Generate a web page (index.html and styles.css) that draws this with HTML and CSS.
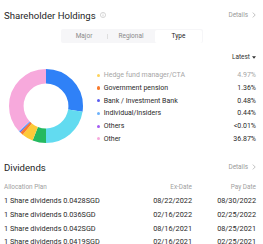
FILE: index.html
```html
<!DOCTYPE html>
<html>
<head>
<meta charset="utf-8">
<link rel="stylesheet" href="styles.css">
</head>
<body>
<div class="page">
  <section class="holdings">
    <div class="head">
      <div class="title">Shareholder Holdings
        <svg class="info" viewBox="0 0 10 10" width="6" height="6"><circle cx="5" cy="5" r="4.3" fill="none" stroke="#b5b5b5" stroke-width="0.9"/><rect x="4.5" y="4.2" width="1" height="3.3" fill="#b5b5b5"/><rect x="4.5" y="2.5" width="1" height="1" fill="#b5b5b5"/></svg>
      </div>
      <div class="more">Details <svg class="chev" viewBox="0 0 6 10" width="4" height="6"><polyline points="1,1 5,5 1,9" fill="none" stroke="#999" stroke-width="1"/></svg></div>
    </div>
    <div class="seg-wrap">
      <div class="seg">
        <span class="opt first">Major</span>
        <span class="opt">Regional</span>
        <span class="opt on">Type</span>
      </div>
    </div>
    <div class="latest-row">
      <span class="latest">Latest <svg viewBox="0 0 6 4" width="4" height="3"><polygon points="0,0 6,0 3,4" fill="#333"/></svg></span>
    </div>
    <div class="chart-row">
      <svg class="donut" viewBox="0 0 74 74" width="74" height="74">
        <g transform="rotate(-90 37 37)" fill="none" stroke-width="14.6">
          <circle cx="37" cy="37" r="29.7" pathLength="100" stroke="#2f81f7" stroke-dasharray="27.5 100" stroke-dashoffset="0"/>
          <circle cx="37" cy="37" r="29.7" pathLength="100" stroke="#62dbf0" stroke-dasharray="22.5 100" stroke-dashoffset="-27.5"/>
          <circle cx="37" cy="37" r="29.7" pathLength="100" stroke="#25b960" stroke-dasharray="5.9 100" stroke-dashoffset="-50"/>
          <circle cx="37" cy="37" r="29.7" pathLength="100" stroke="#fdca38" stroke-dasharray="4.97 100" stroke-dashoffset="-55.9"/>
          <circle cx="37" cy="37" r="29.7" pathLength="100" stroke="#f97b2c" stroke-dasharray="1.36 100" stroke-dashoffset="-60.87"/>
          <circle cx="37" cy="37" r="29.7" pathLength="100" stroke="#5a5cf0" stroke-dasharray="0.48 100" stroke-dashoffset="-62.23"/>
          <circle cx="37" cy="37" r="29.7" pathLength="100" stroke="#6cb1fb" stroke-dasharray="0.44 100" stroke-dashoffset="-62.71"/>
          <circle cx="37" cy="37" r="29.7" pathLength="100" stroke="#f7a9dc" stroke-dasharray="36.85 100" stroke-dashoffset="-63.15"/>
        </g>
      </svg>
      <ul class="legend">
        <li class="dim"><i class="dot" style="background:#fdd35a"></i><span class="lab">Hedge fund manager/CTA</span><span class="val">4.97%</span></li>
        <li><i class="dot" style="background:#f97b2c"></i><span class="lab">Government pension</span><span class="val">1.36%</span></li>
        <li><i class="dot" style="background:#5a5cf0"></i><span class="lab">Bank / Investment Bank</span><span class="val">0.48%</span></li>
        <li><i class="dot" style="background:#6cb1fb"></i><span class="lab">Individual/Insiders</span><span class="val">0.44%</span></li>
        <li><i class="dot" style="background:#a45bf3"></i><span class="lab">Others</span><span class="val">&lt;0.01%</span></li>
        <li><i class="dot" style="background:#f7a9dc"></i><span class="lab">Other</span><span class="val">36.87%</span></li>
      </ul>
    </div>
  </section>

  <section class="dividends">
    <div class="head head2">
      <div class="title">Dividends</div>
      <div class="more">Details <svg class="chev" viewBox="0 0 6 10" width="4" height="6"><polyline points="1,1 5,5 1,9" fill="none" stroke="#999" stroke-width="1"/></svg></div>
    </div>
    <div class="table">
      <div class="row th"><span>Allocation Plan</span><span class="r">Ex-Date</span><span class="r">Pay Date</span></div>
      <div class="row"><span>1 Share dividends 0.0428SGD</span><span class="r">08/22/2022</span><span class="r">08/30/2022</span></div>
      <div class="row"><span>1 Share dividends 0.036SGD</span><span class="r">02/16/2022</span><span class="r">02/25/2022</span></div>
      <div class="row"><span>1 Share dividends 0.042SGD</span><span class="r">08/16/2021</span><span class="r">08/25/2021</span></div>
      <div class="row"><span>1 Share dividends 0.0419SGD</span><span class="r">02/16/2021</span><span class="r">02/25/2021</span></div>
    </div>
  </section>
</div>
</body>
</html>
```

FILE: styles.css
```css
* { box-sizing: border-box; }
html, body { margin: 0; padding: 0; background: #fff; }
body {
  font-family: Roboto, "Liberation Sans", Arial, sans-serif;
  color: #333;
  width: 263px;
  height: 244px;
  overflow: hidden;
}
.page { padding: 0 7px 0 4px; }

.head {
  display: flex;
  justify-content: space-between;
  align-items: center;
  height: 28px;
  padding-top: 2px;
}
.title {
  font-size: 9.6px;
  color: #1e1e1e;
  display: flex;
  align-items: center;
  gap: 4px;
}
.info { display: block; }
.more {
  font-size: 6.4px;
  color: #999;
  display: flex;
  align-items: center;
  gap: 4px;
}
.chev { display: block; }

.seg-wrap {
  display: flex;
  justify-content: center;
  margin-top: 1px;
  padding-left: 3px;
}
.seg {
  display: flex;
  width: 142px;
  height: 14px;
  background: #f6f6f8;
  border-radius: 2px;
}
.opt {
  flex: 1;
  display: flex;
  align-items: center;
  justify-content: center;
  font-size: 6.5px;
  color: #8a8a8a;
  position: relative;
}
.opt.first::after {
  content: "";
  position: absolute;
  right: 0;
  top: 4.5px;
  height: 5px;
  width: 1px;
  background: #dedede;
}
.opt.on {
  background: #fff;
  color: #222;
  border-radius: 2px;
  margin: 0.5px;
}

.latest-row {
  display: flex;
  justify-content: flex-end;
  margin-top: 8px;
  height: 12px;
  align-items: center;
}
.latest {
  font-size: 6.5px;
  color: #333;
  display: flex;
  align-items: center;
  gap: 2px;
}
.latest svg { display: block; }

.chart-row {
  display: flex;
  align-items: flex-start;
  margin-top: 6px;
  height: 76px;
}
.donut { display: block; margin-left: 5px; flex: none; }
.legend {
  list-style: none;
  margin: 0 0 0 14px;
  padding: 0;
  flex: 1;
}
.legend li {
  display: flex;
  align-items: center;
  height: 12.7px;
  font-size: 7px;
  color: #2a2a2a;
}
.legend li.dim { color: #a6a6a6; }
.dot {
  width: 3.2px;
  height: 3.2px;
  border-radius: 50%;
  margin-right: 3.5px;
  flex: none;
}
.lab { flex: 1; }
.val { text-align: right; }

.dividends { margin-top: 16px; }
.head2 { height: 12px; padding-top: 0; }
.table { margin-top: 7.5px; }
.row {
  display: grid;
  grid-template-columns: 1fr 60px 64px;
  height: 13.6px;
  align-items: center;
  font-size: 7.3px;
  color: #2a2a2a;
  white-space: nowrap;
}
.row.th { font-size: 6.4px; color: #a0a0a0; }
.r { text-align: right; }
```
